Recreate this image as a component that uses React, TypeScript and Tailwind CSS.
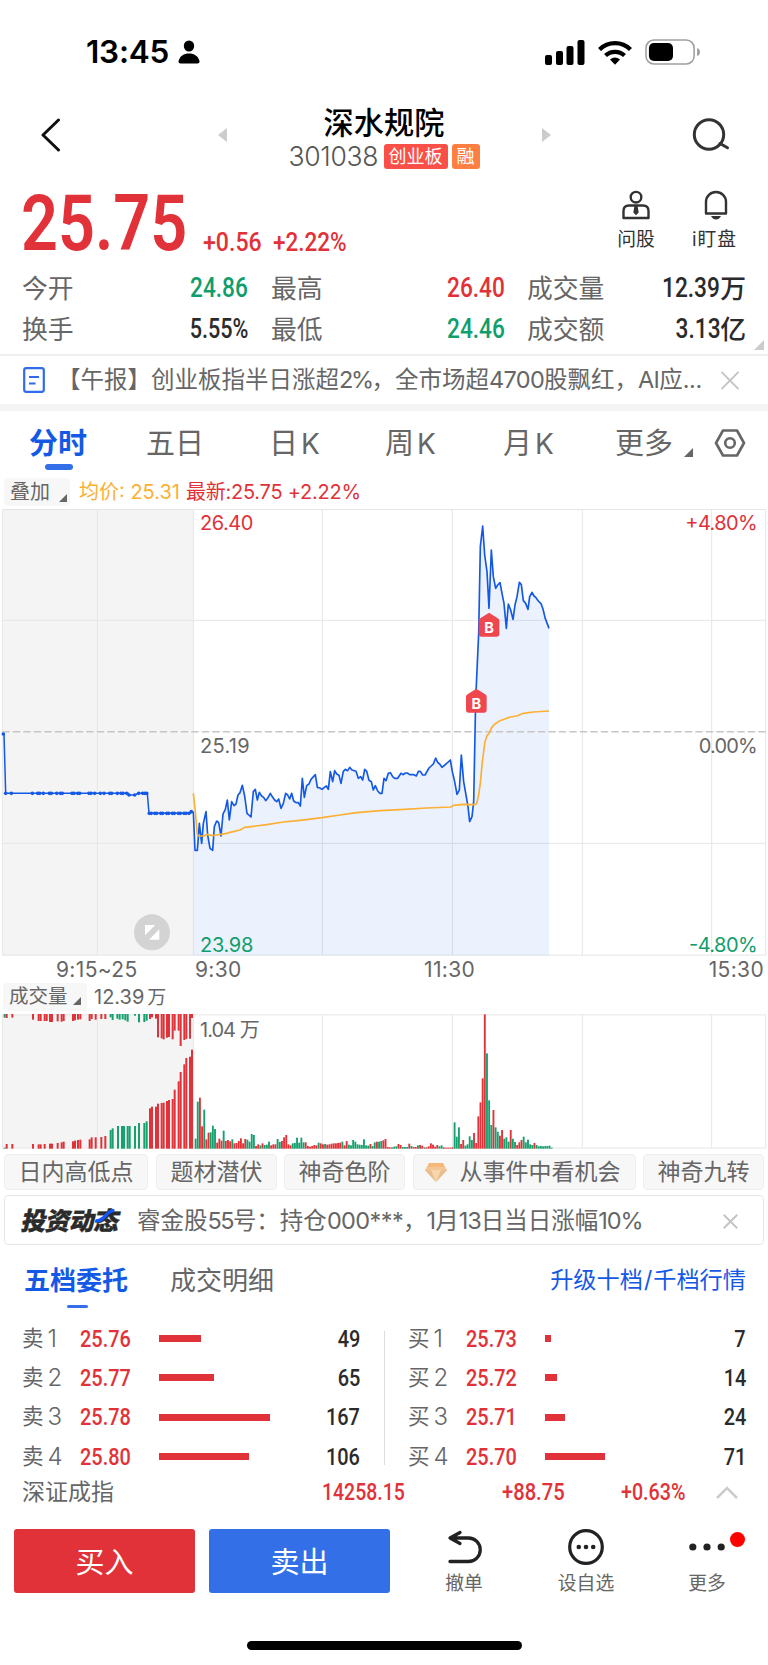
import type { ReactNode } from 'react'
import clsx from 'clsx'

// Chart coordinates are three units per CSS pixel.
const PRE_MARKET = '7,700 12,702 17,880 385,880 387,885 405,885 413,880 442,880 447,940 568,940 573,935 580,935'

const PRICE =
  '580,935 585,1051 592,1051 598,970 605,1030 610,970 618,935 623,1005 630,1045 638,1051 643,980 650,963 656,968 663,1008 669,942 676,928 682,900 688,960 695,905 702,917 708,912 714,885 720,878 727,856 734,888 741,940 753,951 760,875 766,868 772,900 778,877 785,888 791,892 797,902 804,893 811,880 818,892 824,900 830,905 836,897 843,925 850,910 857,880 863,885 869,897 875,880 881,903 888,908 895,908 901,918 907,835 913,892 920,857 927,852 933,838 946,824 952,862 960,864 966,868 972,863 979,858 985,868 991,815 998,845 1004,812 1010,822 1017,826 1023,850 1030,814 1036,808 1043,812 1049,802 1056,810 1068,814 1075,835 1082,830 1088,840 1094,808 1100,814 1107,841 1114,845 1120,870 1126,857 1133,873 1140,880 1146,880 1152,835 1158,842 1165,820 1171,818 1178,830 1184,835 1193,835 1203,820 1210,824 1216,819 1222,819 1229,824 1242,824 1249,828 1255,814 1261,814 1268,825 1275,825 1287,804 1300,792 1307,774 1313,787 1319,792 1326,802 1338,792 1351,780 1357,815 1364,845 1371,883 1378,870 1384,765 1391,845 1398,885 1404,920 1409,965 1416,950 1421,905 1427,600 1436,400 1441,140 1448,78 1454,165 1461,215 1467,325 1474,150 1480,230 1487,265 1493,255 1500,248 1506,280 1512,310 1519,385 1525,312 1532,330 1539,358 1545,315 1551,290 1558,247 1564,254 1570,302 1577,310 1584,328 1589,290 1596,277 1602,288 1608,293 1615,303 1623,311 1629,327 1635,353 1647,385'

const AVERAGE =
  '580,880 585,925 592,1005 598,1008 612,1008 620,1003 637,1007 650,1005 663,1003 680,1000 690,997 720,990 735,982 760,979 800,974 850,966 900,961 966,953 1020,945 1070,938 1140,932 1200,929 1280,924 1353,921 1360,916 1390,913 1425,914 1430,910 1435,890 1441,850 1447,785 1455,725 1461,707 1467,700 1475,683 1485,672 1500,662 1530,651 1550,648 1570,640 1600,636 1647,633'

const PRE_DOTS = [
  17, 34, 97, 113, 119, 130, 148, 154, 170, 181, 187, 216, 222, 233, 239, 267, 273, 284, 301, 312, 329, 335, 352, 363,
  369, 380, 416, 428, 434, 440,
]
const PRE_DOTS_LOW = [448, 454, 464, 470, 482, 488, 500, 506, 517, 523, 535, 541, 552, 558, 567]

// colour, x, length
const QUEUE_TOP =
  'g14:11 r20:12 r37:11 r99:17 r116:21 r122:21 r134:21 r140:21 r150:24 r156:24 r173:22 r185:23 r191:21 r219:21 r225:19 r234:17 r241:16 r269:21 r275:15 r287:17 r304:15 r316:15 g332:10 g338:18 g352:14 g359:17 g368:16 g376:19 g383:23 g405:5 g417:25 g433:24 g440:20 r450:15 r456:10 r468:14 r474:70 r485:73 r491:76 r501:71 r507:69 r518:76 r524:50 r536:50 r542:96 r553:78 r559:75 r570:74 r576:12'
const QUEUE_BOTTOM =
  'g14:3 r20:14 r37:14 r99:14 r116:13 r122:13 r134:14 r150:15 r156:15 r173:17 r185:19 r191:21 r219:22 r225:24 r234:26 r241:27 r269:28 r275:34 r287:34 r304:35 r316:38 g332:56 g338:61 g354:68 g366:68 g372:68 g383:68 g389:68 g405:68 g417:77 g433:77 g440:82 r450:121 r456:126 r468:126 r474:135 r485:137 r491:138 r501:143 r507:146 r518:149 r524:177 r536:202 r542:230 r553:253 r559:272 r570:276 r576:297'

// one entry per minute from 9:30
const VOLUME =
  'g29 g140 r152 r66 g116 r27 r47 g48 g68 g58 r17 r29 r23 g53 r22 r25 r21 g27 r15 r16 r22 r30 r15 r28 g26 g20 g43 g40 r7 r12 g9 r15 g10 g11 g20 r9 r12 r12 g28 g19 r22 r33 r40 r12 r9 g15 g16 g32 g17 g32 g18 r18 r7 r5 r7 r10 r9 g17 r15 r12 g13 r11 r12 r14 r15 r15 r16 r17 g20 r9 r22 g11 g9 g25 g20 g12 g11 g10 g27 g9 g8 r13 g7 g18 r20 g20 g22 r24 r28 r4 r3 g3 g5 g6 r13 r10 g4 g4 g4 r14 g7 r4 r4 g9 r10 r8 g3 r3 r6 r15 r11 r5 r10 g6 g9 r3 r2 r2 r2 r3 g78 g35 g63 r13 r25 g8 g12 g36 g25 r46 r16 r96 r138 r210 r402 g285 g144 g70 r115 g63 g50 r38 r55 g29 g33 g20 r55 g29 g19 r10 r18 r25 g35 g18 g26 g12 g10 r16 g10 g6 g7 g6 g7 g7 g8 g2'

const fills: Record<string, string> = { r: '#e03238', g: '#15a06e' }

const sells = [
  { n: 1, price: '25.76', bar: 42, qty: 49 },
  { n: 2, price: '25.77', bar: 55, qty: 65 },
  { n: 3, price: '25.78', bar: 111, qty: 167 },
  { n: 4, price: '25.80', bar: 90, qty: 106 },
]
const buys = [
  { n: 1, price: '25.73', bar: 6, qty: 7 },
  { n: 2, price: '25.72', bar: 12, qty: 14 },
  { n: 3, price: '25.71', bar: 20, qty: 24 },
  { n: 4, price: '25.70', bar: 60, qty: 71 },
]

const Num = ({ children, className, right }: { children: ReactNode; className?: string; right?: boolean }) => (
  <span
    className={clsx(
      'inline-block whitespace-nowrap font-[Roboto,sans-serif] font-medium',
      right ? 'origin-right' : 'origin-left',
      className
    )}
  >
    {children}
  </span>
)

const Corner = ({ className }: { className?: string }) => (
  <svg viewBox="0 0 10 10" className={className}>
    <path d="M10 0v10H0z" fill="currentColor" />
  </svg>
)

const Cross = ({ className, width }: { className?: string; width: number }) => (
  <svg viewBox="0 0 20 20" className={className} fill="none" stroke="#c4c4c4" strokeWidth={width}>
    <path d="M1 1l18 18M19 1L1 19" />
  </svg>
)

function StatusBar() {
  return (
    <div className="flex h-[104px] items-center pl-[86px] pr-[67px]">
      <span className="w-[92px] whitespace-nowrap text-[31.500px] font-semibold leading-none tracking-[-0.2px]">13:45</span>
      <svg viewBox="0 0 22 24" className="h-6 w-[22px]">
        <ellipse cx="11" cy="6" rx="5.2" ry="5.6" />
        <path d="M.5 21.5C1.5 16 6 13.500 11 13.500S20.500 16 21.500 21.500Q21.500 23.500 19.500 23.500H2.500Q.5 23.500.5 21.500z" />
      </svg>
      <svg viewBox="0 0 40 25" className="ml-auto h-[25px] w-10">
        <rect x="0" y="15" width="7" height="10" rx="2" />
        <rect x="11" y="11" width="7" height="14" rx="2" />
        <rect x="21.500" y="6" width="7" height="19" rx="2" />
        <rect x="32.500" y="0" width="7" height="25" rx="2" />
      </svg>
      <svg viewBox="0 0 34 25" className="ml-[13px] h-[25px] w-[34px]" fill="none" stroke="#000" strokeWidth="4.300">
        <path d="M1.500 9.500A22 22 0 0 1 32.500 9.500" />
        <path d="M7.500 15.500A14 14 0 0 1 26.500 15.500" />
        <path d="M12 19.500Q17 15.500 22 19.500L17 24.800z" fill="#000" stroke="none" />
      </svg>
      <svg viewBox="0 0 57 26" className="ml-[13px] h-[26px] w-[56px]" preserveAspectRatio="none">
        <rect x="1" y="1" width="49" height="24" rx="8" fill="none" stroke="#a0a0a0" strokeWidth="1.600" />
        <rect x="4" y="4" width="24.500" height="18" rx="5" />
        <path d="M53 9q3 1 3 4t-3 4z" fill="#a0a0a0" />
      </svg>
    </div>
  )
}

function Header() {
  return (
    <div className="flex h-[62px] items-center justify-between pl-[40px] pr-[38px]">
      <svg viewBox="0 0 22 34" className="mr-[14px] h-[34px] w-[22px]" fill="none" stroke="#111" strokeWidth="3" strokeLinecap="round" strokeLinejoin="round">
        <path d="M18.500 2L3 17l15.500 15" />
      </svg>
      <div className="flex w-[333px] items-center justify-between">
        <svg viewBox="0 0 9 14" className="h-[14px] w-[9px]" fill="#ccc">
          <path d="M9 0v14L0 7z" />
        </svg>
        <div className="pt-[5px]">
          <div className="mb-1 text-center text-[30.200px] font-medium leading-[34px] text-black">深水规院</div>
          <div className="flex h-[26px] items-center">
            <span className="w-[95px] whitespace-nowrap text-[26.500px] font-light leading-none tracking-[-0.3px] text-[#555]">301038</span>
            <span className="flex h-[25px] w-16 items-center justify-center rounded-[3px] bg-[#fb5048] text-[18px] leading-none text-white">创业板</span>
            <span className="ml-1 flex h-[25px] w-7 items-center justify-center rounded-[3px] bg-[#ff7e42] text-[18px] leading-none text-white">融</span>
          </div>
        </div>
        <svg viewBox="0 0 9 14" className="h-[14px] w-[9px]" fill="#ccc">
          <path d="M0 0v14l9-7z" />
        </svg>
      </div>
      <svg viewBox="0 0 38 34" className="h-[34px] w-[38px]" fill="none" stroke="#333" strokeWidth="3">
        <circle cx="17" cy="16.500" r="14.700" />
        <path d="M28 25.500l7.500 4.200" strokeLinecap="round" />
      </svg>
    </div>
  )
}

function Quote() {
  return (
    <div className="flex h-[102px] pl-[21px] pr-[31px]">
      <Num className="mt-[18px] w-[206px] scale-x-[.83] text-[78px] font-semibold leading-[79px] text-[#e03238]">25.75</Num>
      <Num className="-ml-[24px] mt-[63px] w-[70px] scale-x-[.89] text-[26px] leading-[26px] text-[#e03238]">+0.56</Num>
      <Num className="mt-[63px] scale-x-[.865] text-[26px] leading-[26px] text-[#e03238]">+2.22%</Num>
      <div className="ml-auto mt-6 flex gap-[37px] text-[18.800px] leading-none text-[#333]">
        <div className="flex flex-col items-center">
          <svg viewBox="0 0 28 30" className="mb-[11px] h-[30px] w-7" fill="none" stroke="#333" strokeWidth="2.400">
            <circle cx="14" cy="7.200" r="5.300" />
            <path d="M1.500 28V21q0-5.500 5.500-5.500h14q5.500 0 5.500 5.500v7z" strokeLinejoin="round" />
            <path d="M12.500 15.500h3l1.200 7-2.700 2.800-2.700-2.800z" fill="#333" stroke="none" />
          </svg>
          问股
        </div>
        <div className="flex flex-col items-center">
          <svg viewBox="0 0 24 30" className="mb-[11px] ml-1 h-[30px] w-6" fill="none" stroke="#333" strokeWidth="2.400">
            <path d="M2 23.500V12a10 10 0 0 1 20 0v11.500z" strokeLinejoin="round" />
            <path d="M7 26h10q-2 3.500-5 3.500T7 26z" fill="#333" stroke="none" />
          </svg>
          <span className="tracking-[1px]">i盯盘</span>
        </div>
      </div>
    </div>
  )
}

function Stat({ label, value, unit, className, tone }: { label: string; value: string; unit?: string; className: string; tone: string }) {
  return (
    <div className={clsx('flex h-[41px] items-center justify-between text-[25.800px] leading-none', className)}>
      <span className="whitespace-nowrap text-[#666]">{label}</span>
      <span className={clsx('flex items-center justify-end', tone)}>
        <Num right className={clsx('-ml-8 text-[27px]', value.endsWith('%') ? 'scale-x-[.8]' : 'scale-x-[.84]')}>{value}</Num>
        {unit && <span className="font-medium">{unit}</span>}
      </span>
    </div>
  )
}

function Stats() {
  return (
    <div className="relative h-[86px] pl-[22px]">
      <div className="flex">
        <Stat className="w-[226px]" label="今开" value="24.86" tone="text-[#109e6c]" />
        <Stat className="ml-[23px] w-[234px]" label="最高" value="26.40" tone="text-[#e03238]" />
        <Stat className="ml-[22px] w-[219px]" label="成交量" value="12.39" unit="万" tone="text-[#2b2b2b]" />
      </div>
      <div className="flex">
        <Stat className="w-[226px]" label="换手" value="5.55%" tone="text-[#2b2b2b]" />
        <Stat className="ml-[23px] w-[234px]" label="最低" value="24.46" tone="text-[#109e6c]" />
        <Stat className="ml-[22px] w-[219px]" label="成交额" value="3.13" unit="亿" tone="text-[#2b2b2b]" />
      </div>
      <Corner className="absolute right-1 top-[72px] size-[10px] text-[#ccc]" />
    </div>
  )
}

function News() {
  return (
    <div className="flex h-[50px] items-center border-t-2 border-[#f0f0f0] pl-[23px] pr-7">
      <svg viewBox="0 0 22 26" className="h-[26px] w-[22px]" fill="none" stroke="#2f6bea" strokeWidth="2.200">
        <rect x="1.200" y="1.200" width="19.600" height="23.600" rx="2" />
        <path d="M6 10h10M6 16.500h6.500" />
      </svg>
      <span className="ml-[12px] w-[663px] whitespace-nowrap text-[23.500px] leading-none text-[#666]">
        【午报】创业板指半日涨超<span className="tracking-[-2.4px]">2%</span>，全市场超
        <span className="tracking-[-0.7px]">4700</span>股飘红，<span className="tracking-[-0.7px]">AI</span>应
        <span className="tracking-[-0.4px]">...</span>
      </span>
      <Cross className="h-[19px] w-5 shrink-0" width={2} />
    </div>
  )
}

function PeriodTabs() {
  return (
    <div className="flex h-[63px] items-center pl-[29px] pt-[2px] text-[29px] leading-none text-[#666]">
      <div className="relative w-[117px] whitespace-nowrap font-bold text-[#1459e6]">
        分时
        <span className="absolute left-4 top-[35px] h-[6px] w-7 rounded-full bg-[#3370e8]" />
      </div>
      <span className="w-[123px] whitespace-nowrap">五日</span>
      <span className="w-[116px] whitespace-nowrap">日<span className="ml-[3px] text-[28px]">K</span></span>
      <span className="w-[118px] whitespace-nowrap">周<span className="ml-[3px] text-[28px]">K</span></span>
      <span className="w-[112px] whitespace-nowrap">月<span className="ml-[3px] text-[28px]">K</span></span>
      <span className="w-[69px] whitespace-nowrap">更多</span>
      <Corner className="mt-[18px] size-[9px] text-[#666]" />
      <svg viewBox="0 0 32 28" className="mb-[2px] ml-[21px] h-7 w-8" fill="none" stroke="#666" strokeWidth="2.600" strokeLinejoin="round">
        <path d="M9 1.500h14L30 14l-7 12.500H9L2 14z" />
        <circle cx="16" cy="14" r="4.800" />
      </svg>
    </div>
  )
}

const BuyMark = ({ x, y }: { x: number; y: number }) => (
  <g>
    <path d={`M${x - 31} ${y + 24}q0-6 6-8L${x} ${y}l25 16q6 2 6 8v41q0 7-7 7h-48q-7 0-7-7z`} fill="#ef474e" />
    <text x={x} y={y + 61} textAnchor="middle" fill="#fff" fontSize="44" fontWeight="700">B</text>
  </g>
)

function PriceChart() {
  return (
    <svg viewBox="0 27 2304 1341" className="block h-[447px] w-[768px]">
      <rect x="7" y="28" width="572" height="1338" fill="#f4f4f4" />
      <g stroke="#e6e6e6" strokeWidth="3" fill="none">
        <path d="M7 28.500H2297V1365.500H7zM7 361H2297M7 1030H2297" />
        <path d="M292 28V1366M580 28V1366M967 28V1366M1357 28V1366M1747 28V1366M2135 28V1366" />
      </g>
      <polygon points={`580,1366 ${PRICE} 1647,1366`} fill="#1459e6" fillOpacity=".085" />
      <path d="M7 695.500H2297" stroke="#c6c6c6" strokeWidth="4.500" strokeDasharray="22 9.500" />
      <g fill="none" strokeLinejoin="round">
        <polyline points={PRE_MARKET} stroke="#1459e6" strokeWidth="4.500" />
        <polyline points={PRICE} stroke="#1459e6" strokeWidth="5" />
        <polyline points={AVERAGE} stroke="#fbb034" strokeWidth="5" />
      </g>
      <g fill="#1459e6">
        <circle cx="10" cy="702" r="5.500" />
        {PRE_DOTS.map((x) => <circle key={x} cx={x} cy="880" r="5.500" />)}
        <circle cx="387" cy="885" r="5.500" />
        <circle cx="404" cy="885" r="5.500" />
        {PRE_DOTS_LOW.map((x) => <circle key={x} cx={x} cy="940" r="5.500" />)}
        <circle cx="574" cy="935" r="5.500" />
      </g>
      <BuyMark x={1467} y={338} />
      <BuyMark x={1429} y={566} />
      <g fontSize="60" fill="#666">
        <text x="600" y="89" fill="#e03238" textLength="160">26.40</text>
        <text x="600" y="758" textLength="149">25.19</text>
        <text x="600" y="1356" fill="#109e6c" textLength="160">23.98</text>
        <text x="2273" y="89" fill="#e03238" textAnchor="end" textLength="217">+4.80%</text>
        <text x="2273" y="758" textAnchor="end" textLength="177">0.00%</text>
        <text x="2273" y="1356" fill="#109e6c" textAnchor="end" textLength="206">-4.80%</text>
      </g>
      <circle cx="456" cy="1297" r="54" fill="#d3d3d3" />
      <path d="M435 1275h31l-31 31zM478 1319h-31l31-31z" fill="#fff" />
    </svg>
  )
}

function VolumeChart() {
  return (
    <svg viewBox="0 99 2304 408" className="block h-[136px] w-[768px]">
      <rect x="7" y="104" width="572" height="400" fill="#f4f4f4" />
      <path
        d="M7 104.500H2297V504H7zM292 104V504M580 104V504M967 104V504M1357 104V504M1747 104V504M2135 104V504"
        stroke="#e6e6e6"
        strokeWidth="3"
        fill="none"
      />
      {QUEUE_TOP.split(' ').map((b) => {
        const [x, h] = b.slice(1).split(':').map(Number)
        return <rect key={b} x={x - 3} y="102" width="6" height={h} fill={fills[b[0]]} />
      })}
      {QUEUE_BOTTOM.split(' ').map((b) => {
        const [x, h] = b.slice(1).split(':').map(Number)
        return <rect key={b} x={x - 3} y={506 - h} width="6" height={h} fill={fills[b[0]]} />
      })}
      {VOLUME.split(' ').map((b, i) => {
        const h = Number(b.slice(1)) + 1
        return <rect key={i} x={584 + i * 6.475} y={506 - h} width="5.600" height={h} fill={fills[b[0]]} />
      })}
      <text x="600" y="171" fontSize="60" fill="#666" textLength="179">1.04 万</text>
    </svg>
  )
}

const chip = 'flex h-9 items-center justify-center whitespace-nowrap rounded border border-[#efefef] bg-[#f7f7f7]'

function Chips() {
  return (
    <div className="flex h-[46px] items-center pl-1 text-[23px] leading-none text-[#666]">
      <div className={clsx(chip, 'w-[144px]')}>日内高低点</div>
      <div className={clsx(chip, 'ml-2 w-[121px]')}>题材潜伏</div>
      <div className={clsx(chip, 'ml-[7px] w-[121px]')}>神奇色阶</div>
      <div className={clsx(chip, 'ml-2 w-[223px] gap-[13px] pr-1')}>
        <svg viewBox="0 0 22 19" className="h-[19px] w-[22px]">
          <path d="M4 0h14l4 7-11 12L0 7z" fill="#f3c795" />
          <path d="M4 0h14l1 4H3z" fill="#f6b77b" />
          <path d="M0 7h6l5 12zM22 7h-6l-5 12z" fill="#e9bd8d" />
          <path d="M6 7h10l-5 12z" fill="#f7d6ad" />
        </svg>
        从事件中看机会
      </div>
      <div className={clsx(chip, 'ml-[7px] w-[121px]')}>神奇九转</div>
    </div>
  )
}

function Banner() {
  return (
    <div className="mx-1 flex h-[50px] items-center rounded border border-[#e6e6e6] pl-[17px] pr-[25px] pt-[2px] leading-none">
      <span className="relative w-[115px] -skew-x-12 whitespace-nowrap text-[24.800px] font-black tracking-[-0.5px] text-[#2b2b2b] [-webkit-text-stroke:0.4px_#2b2b2b]">
        投资动态
        <svg viewBox="0 0 18 14" className="absolute left-[73px] top-0 h-[14px] w-[18px]" fill="none" stroke="#1459ff" strokeWidth="3.500">
          <path d="M0 12q6 0 9-5t8-6" />
        </svg>
      </span>
      <span className="whitespace-nowrap text-[23.500px] text-[#666]">
        睿金股<span className="tracking-[-1.6px]">55</span>号：持仓<span className="tracking-[-0.6px]">000***</span>，
        <span className="tracking-[-1px]">1</span>月<span className="tracking-[-1px]">13</span>日当日涨幅
        <span className="tracking-[-1px]">10%</span>
      </span>
      <Cross className="ml-auto size-[15px]" width={2.6} />
    </div>
  )
}

function BookSide({ label, rows, className }: { label: string; rows: typeof sells; className: string }) {
  return (
    <div className={className}>
      {rows.map((r) => (
        <div key={r.n} className="flex h-[39.300px] items-center leading-none">
          <span className="flex w-[58px] items-center gap-[4px] text-[21.500px] text-[#666]">
            {label}
            <span className="text-[24px] font-light">{r.n}</span>
          </span>
          <Num className="w-[79px] scale-x-[.83] text-[24px] text-[#e03238]">{r.price}</Num>
          <span className="h-[7px] bg-[#e03238]" style={{ width: r.bar }} />
          <Num right className="ml-auto scale-x-[.83] text-[24px] text-[#2b2b2b]">{r.qty}</Num>
        </div>
      ))}
    </div>
  )
}

function OrderBook() {
  return (
    <>
      <div className="flex h-[74px] items-center pb-[3px] pl-6 pr-[22px] text-[26px] leading-none text-[#666]">
        <div className="relative w-[146px] whitespace-nowrap font-bold text-[#1459e6]">
          五档委托
          <span className="absolute left-[43px] top-[37px] h-[3px] w-[21px] rounded bg-[#3370e8]" />
        </div>
        <span>成交明细</span>
        <span className="ml-auto whitespace-nowrap text-[23.200px] text-[#1459e6]">
          升级十档<span className="mx-px">/</span>千档行情
        </span>
      </div>
      <div className="flex h-[146px] pl-[22px]">
        <BookSide label="卖" rows={sells} className="w-[338px]" />
        <div className="ml-6 mt-3 w-px bg-[#ddd]" />
        <BookSide label="买" rows={buys} className="ml-[23px] w-[338px]" />
      </div>
    </>
  )
}

function IndexRow() {
  return (
    <div className="flex h-[54px] items-center pl-[22px] leading-none text-[#e03238]">
      <span className="w-[300px] text-[23px] text-[#666]">深证成指</span>
      <Num className="w-[180px] scale-x-[.81] text-[24px]">14258.15</Num>
      <Num className="w-[119px] scale-x-[.84] text-[24px]">+88.75</Num>
      <Num className="w-[95px] scale-x-[.82] text-[24px]">+0.63%</Num>
      <svg viewBox="0 0 22 13" className="h-[13px] w-[22px]" fill="none" stroke="#ccc" strokeWidth="2.500">
        <path d="M1 12L11 2l10 10" />
      </svg>
    </div>
  )
}

function ActionBar() {
  return (
    <div className="flex h-[146px] flex-col">
      <div className="flex pl-[14px] pt-[10px] leading-none">
        <button className="h-16 w-[181px] rounded-[3px] bg-[#e03238] pt-[2px] text-[29px] text-white">买入</button>
        <button className="ml-[14px] h-16 w-[181px] rounded-[3px] bg-[#3370e8] pt-[2px] text-[29px] text-white">卖出</button>
        <div className="ml-[34px] flex w-20 flex-col items-center text-[18.800px] text-[#666]">
          <svg viewBox="0 0 36 36" className="mb-[10px] ml-px h-9 w-9" fill="none" stroke="#222" strokeWidth="3.300" strokeLinecap="round" strokeLinejoin="round">
            <path d="M3 32.500h18.500a11.500 11.500 0 0 0 0-23.500H4M13 3.500L3 9l10 5.500" />
          </svg>
          撤单
        </div>
        <div className="ml-[42px] flex w-20 flex-col items-center text-[18.800px] text-[#666]">
          <svg viewBox="0 0 36 36" className="mb-[10px] h-9 w-9" fill="#222">
            <circle cx="18" cy="18" r="16.300" fill="none" stroke="#222" strokeWidth="3.200" />
            <circle cx="10.800" cy="18" r="2.300" />
            <circle cx="18" cy="18" r="2.300" />
            <circle cx="25.200" cy="18" r="2.300" />
          </svg>
          设自选
        </div>
        <div className="relative ml-[41px] flex w-20 flex-col items-center text-[18.800px] text-[#666]">
          <svg viewBox="0 0 36 36" className="mb-[10px] h-9 w-9" fill="#222">
            <circle cx="3.800" cy="18" r="3.600" />
            <circle cx="18" cy="18" r="3.600" />
            <circle cx="32.200" cy="18" r="3.600" />
          </svg>
          更多
          <span className="absolute left-[63px] top-[3px] size-[15px] rounded-full bg-[#ff0000]" />
        </div>
      </div>
      <div className="mx-auto mb-[15px] mt-auto h-[9px] w-[275px] rounded-full bg-black" />
    </div>
  )
}

export default function App() {
  return (
    <div className="h-[1665px] w-[768px] overflow-hidden bg-white font-[Inter,'Noto_Sans_CJK_SC',sans-serif] text-black">
      <StatusBar />
      <Header />
      <Quote />
      <Stats />
      <News />
      <div className="h-[7px] bg-[#f4f4f4]" />
      <PeriodTabs />
      <div className="flex h-[35px] items-center pl-1 text-[20px] leading-none">
        <div className="flex h-7 w-[66px] items-center rounded bg-[#f7f7f7] pl-[6px] text-[#666]">
          <span className="w-[49px] whitespace-nowrap text-[20px]">叠加</span>
          <Corner className="mt-[13px] size-2 text-[#666]" />
        </div>
        <span className="ml-[9px] w-[107px] whitespace-nowrap text-[#fbb034]">均价: 25.31</span>
        <span className="whitespace-nowrap tracking-[-0.25px] text-[#e03238]">最新:25.75 +2.22%</span>
      </div>
      <PriceChart />
      <div className="flex h-[27px] items-center pl-[56px] pr-[4px] text-[21px] leading-none tracking-[0.35px] text-[#666]">
        <span className="w-[139px]">9:15~25</span>
        <span className="w-[229px]">9:30</span>
        <span>11:30</span>
        <span className="ml-auto">15:30</span>
      </div>
      <div className="mb-[2px] flex h-7 items-center pl-[3px] text-[20px] leading-none text-[#666]">
        <div className="flex h-7 w-[84px] items-center rounded bg-[#f7f7f7] pl-[6px]">
          <span className="w-16 whitespace-nowrap text-[19.500px]">成交量</span>
          <Corner className="mt-[8px] size-2" />
        </div>
        <span className="ml-[7px]">12.39<span className="ml-[3px] text-[19px]">万</span></span>
      </div>
      <VolumeChart />
      <Chips />
      <Banner />
      <OrderBook />
      <IndexRow />
      <ActionBar />
    </div>
  )
}
